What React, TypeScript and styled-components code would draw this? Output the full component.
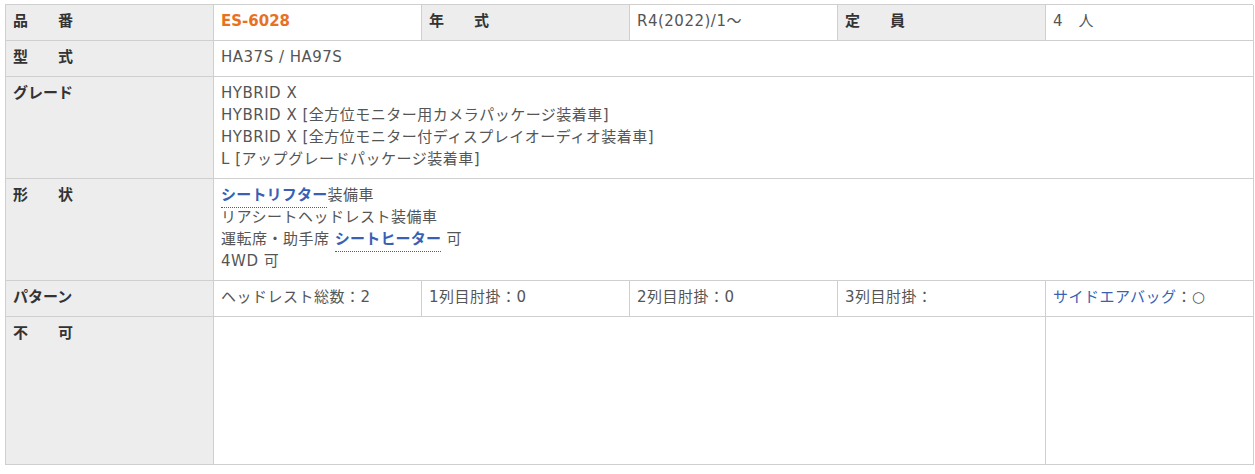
import React from 'react';
import styled, { createGlobalStyle } from 'styled-components';

const GlobalStyle = createGlobalStyle`
  body {
    margin: 0;
    background: #fff;
    font-family: 'DejaVu Sans', 'Noto Sans CJK JP', sans-serif;
  }
`;

const Page = styled.div`
  padding: 4px 2px 0 5px;
`;

const Table = styled.div`
  display: grid;
  grid-template-columns: repeat(6, 208px);
  width: 1248px;
  border-top: 1px solid #cfcfcf;
  border-left: 1px solid #cfcfcf;
  box-sizing: border-box;
`;

const Cell = styled.div<{ $span?: number; $height?: number }>`
  grid-column: span ${(p) => p.$span || 1};
  min-height: ${(p) => (p.$height ? `${p.$height}px` : 'auto')};
  padding: 5px 8px 8px 7px;
  border-right: 1px solid #cfcfcf;
  border-bottom: 1px solid #cfcfcf;
  font-size: 15px;
  line-height: 22px;
  box-sizing: border-box;
`;

const Label = styled(Cell)`
  background: #ededed;
  color: #333;
  font-weight: bold;
`;

const Value = styled(Cell)`
  background: #fff;
  color: #555;
  letter-spacing: 0.5px;
`;

const Code = styled.span`
  color: #e8711f;
  font-weight: bold;
  letter-spacing: 0;
`;

const Line = styled.div`
  height: 22px;
  white-space: nowrap;
`;

const Term = styled.span`
  color: #3a5fb4;
  font-weight: bold;
  letter-spacing: 0.2px;
  padding-bottom: 3px;
  border-bottom: 1px dotted #3a5fb4;
`;

const Blue = styled.span`
  color: #3a5fb4;
`;

const grades = [
  'HYBRID X',
  'HYBRID X [全方位モニター用カメラパッケージ装着車]',
  'HYBRID X [全方位モニター付ディスプレイオーディオ装着車]',
  'L [アップグレードパッケージ装着車]',
];

const App = () => {
  return (
    <Page>
      <GlobalStyle />
      <Table>
        <Label>
          <Line>品　　番</Line>
        </Label>
        <Value>
          <Line>
            <Code>ES-6028</Code>
          </Line>
        </Value>
        <Label>
          <Line>年　　式</Line>
        </Label>
        <Value>
          <Line>R4(2022)/1～</Line>
        </Value>
        <Label>
          <Line>定　　員</Line>
        </Label>
        <Value>
          <Line>4　人</Line>
        </Value>

        <Label>
          <Line>型　　式</Line>
        </Label>
        <Value $span={5}>
          <Line>HA37S / HA97S</Line>
        </Value>

        <Label>
          <Line>グレード</Line>
        </Label>
        <Value $span={5}>
          {grades.map((g) => (
            <Line key={g}>{g}</Line>
          ))}
        </Value>

        <Label>
          <Line>形　　状</Line>
        </Label>
        <Value $span={5}>
          <Line>
            <Term>シートリフター</Term>装備車
          </Line>
          <Line>リアシートヘッドレスト装備車</Line>
          <Line>
            運転席・助手席 <Term>シートヒーター</Term> 可
          </Line>
          <Line>4WD 可</Line>
        </Value>

        <Label>
          <Line>パターン</Line>
        </Label>
        <Value>
          <Line>ヘッドレスト総数：2</Line>
        </Value>
        <Value>
          <Line>1列目肘掛：0</Line>
        </Value>
        <Value>
          <Line>2列目肘掛：0</Line>
        </Value>
        <Value>
          <Line>3列目肘掛：</Line>
        </Value>
        <Value>
          <Line>
            <Blue>サイドエアバッグ</Blue>：○
          </Line>
        </Value>

        <Label $height={148}>
          <Line>不　　可</Line>
        </Label>
        <Value $span={4} $height={148} />
        <Value $height={148} />
      </Table>
    </Page>
  );
};

export default App;
